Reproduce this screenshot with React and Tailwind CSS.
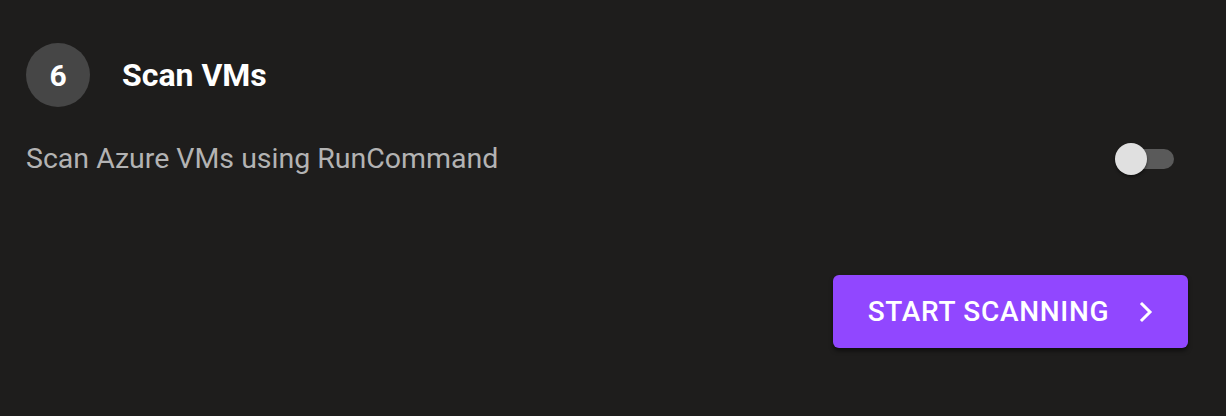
import React, { useState } from "react";

function Toggle({ on, onChange }) {
  return (
    <button
      onClick={() => onChange(!on)}
      className="relative w-[60px] h-[34px] flex items-center"
    >
      <span className="absolute left-[3px] right-0 h-[20px] rounded-full bg-[#5a5a5a]" />
      <span
        className={`absolute top-[1px] w-[32px] h-[32px] rounded-full bg-[#e0e0e0] shadow-[0_2px_3px_rgba(0,0,0,0.45)] ${
          on ? "left-[28px]" : "left-[1px]"
        }`}
      />
    </button>
  );
}

export default function App() {
  const [scan, setScan] = useState(false);

  return (
    <div
      className="h-[416px] bg-[#1e1d1c] text-white pl-[26px] pr-[38px] pt-[43px]"
      style={{ fontFamily: "Roboto, 'Noto Sans', sans-serif" }}
    >
      {/* Step header */}
      <div className="flex items-center gap-[32px]">
        <div className="w-[64px] h-[64px] rounded-full bg-[#464646] flex items-center justify-center text-[30px] font-bold">
          6
        </div>
        <h2 className="text-[32px] font-bold">Scan VMs</h2>
      </div>

      {/* Option */}
      <div className="flex items-center justify-between mt-[31px] pr-[14px]">
        <p className="text-[28.5px] leading-[42px] text-[#b3b3b3]">Scan Azure VMs using RunCommand</p>
        <Toggle on={scan} onChange={setScan} />
      </div>

      {/* Action */}
      <div className="flex justify-end mt-[95px]">
        <button className="w-[355px] h-[73px] rounded-[6px] bg-[#9147ff] flex items-center justify-center gap-[30px] text-[28px] font-medium tracking-[0.025em] shadow-[0_3px_4px_rgba(0,0,0,0.5)]">
          START SCANNING
          <svg width="14" height="22" viewBox="0 0 14 22" fill="none" stroke="white" strokeWidth="3" strokeLinecap="square">
            <path d="M3 3l8 8-8 8" />
          </svg>
        </button>
      </div>
    </div>
  );
}
